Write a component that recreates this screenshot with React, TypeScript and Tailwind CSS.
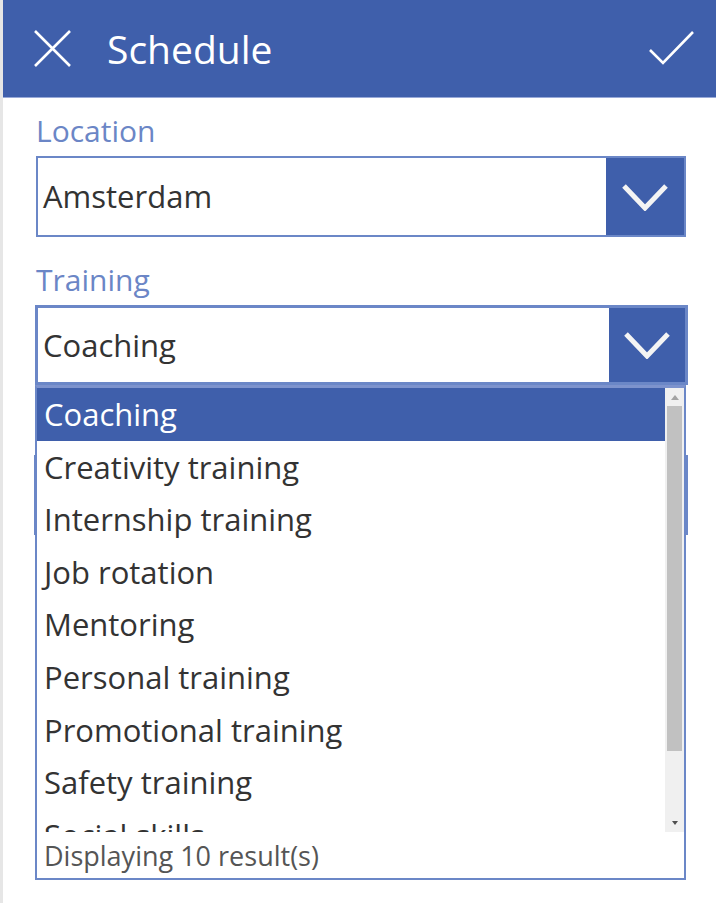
import React from "react";

const trainings = [
  "Coaching",
  "Creativity training",
  "Internship training",
  "Job rotation",
  "Mentoring",
  "Personal training",
  "Promotional training",
  "Safety training",
  "Social skills",
  "Team building",
];

function Chevron() {
  return (
    <svg width="46" height="28" viewBox="0 0 46 28" fill="none">
      <path d="M2 3 L23 25 L44 3" stroke="#f4f4f4" strokeWidth="5" strokeLinejoin="miter" />
    </svg>
  );
}

export default function App() {
  return (
    <div className="w-[716px] h-[903px] bg-white border-l-[3px] border-[#e6e6e6] font-['Open_Sans',sans-serif] overflow-hidden">
      {/* HEADER */}
      <header className="h-[98px] bg-[#3f5fab] border-b border-[#98a9d8] flex items-center pl-[31px] pr-[21px]">
        <svg width="37" height="37" viewBox="0 0 37 37" fill="none">
          <path d="M1 1 L36 36 M36 1 L1 36" stroke="white" strokeWidth="2.6" />
        </svg>
        <h1 className="ml-[36px] text-[39px] leading-none text-white">Schedule</h1>
        <svg className="ml-auto" width="46" height="36" viewBox="0 0 46 36" fill="none">
          <path d="M1 19 L14 32 L44 1" stroke="white" strokeWidth="2.6" />
        </svg>
      </header>

      <div className="pl-[33px] pr-[30px] pt-[13px]">
        {/* LOCATION */}
        <label className="block text-[30px] leading-[40px] text-[#6b86c6] mb-[5px]">Location</label>
        <div className="h-[81px] border-2 border-[#6b87c7] flex">
          <div className="flex-1 flex items-center pl-[5px] text-[31px] text-[#333]">Amsterdam</div>
          <div className="w-[78px] bg-[#3f5fab] flex items-center justify-center">
            <Chevron />
          </div>
        </div>

        {/* TRAINING */}
        <label className="block mt-[23px] text-[30px] leading-[40px] text-[#6b86c6] mb-[5px]">Training</label>
        <div className="relative">
          <div className="h-[80px] border-[3px] border-[#6b87c7] flex -ml-[1px] mr-[-2px]">
            <div className="flex-1 flex items-center pl-[5px] text-[31px] text-[#333]">Coaching</div>
            <div className="w-[76px] bg-[#3f5fab] flex items-center justify-center">
              <Chevron />
            </div>
          </div>

          {/* DROPDOWN LIST */}
          <div className="absolute z-10 -left-[1px] right-0 top-full bg-white border-2 border-t-[3px] border-[#6b87c7] border-t-[#7d93cd]">
            <div className="flex h-[444px]">
              <ul className="flex-1 overflow-hidden">
                {trainings.map((t, i) => (
                  <li
                    key={t}
                    className={
                      i === 0
                        ? "h-[52.6px] flex items-center pl-[7px] text-[31px] bg-[#3f5fab] text-white"
                        : "h-[52.6px] flex items-center pl-[7px] text-[31px] text-[#333]"
                    }
                  >
                    {t}
                  </li>
                ))}
              </ul>
              <div className="w-[19px] bg-[#f0f0f0] flex flex-col items-center">
                <div className="h-[18px] flex items-center justify-center">
                  <div className="w-0 h-0 border-l-[4px] border-r-[4px] border-b-[5px] border-l-transparent border-r-transparent border-b-[#a3a3a3]" />
                </div>
                <div className="w-[15px] h-[345px] bg-[#c1c1c1]" />
                <div className="flex-1" />
                <div className="h-[18px] flex items-center justify-center">
                  <div className="w-0 h-0 border-l-[3px] border-r-[3px] border-t-[4px] border-l-transparent border-r-transparent border-t-[#505050]" />
                </div>
              </div>
            </div>
            <div className="h-[46px] flex items-center pl-[7px] pt-[3px] text-[27px] text-[#555]">Displaying 10 result(s)</div>
          </div>
        </div>

        {/* NEXT FIELD (under the list) */}
        <div className="mt-[23px] h-[40px] mb-[7px]" />
        <div className="h-[80px] border-2 border-[#6b87c7] -ml-[2px] -mr-[2px]" />
      </div>
    </div>
  );
}
